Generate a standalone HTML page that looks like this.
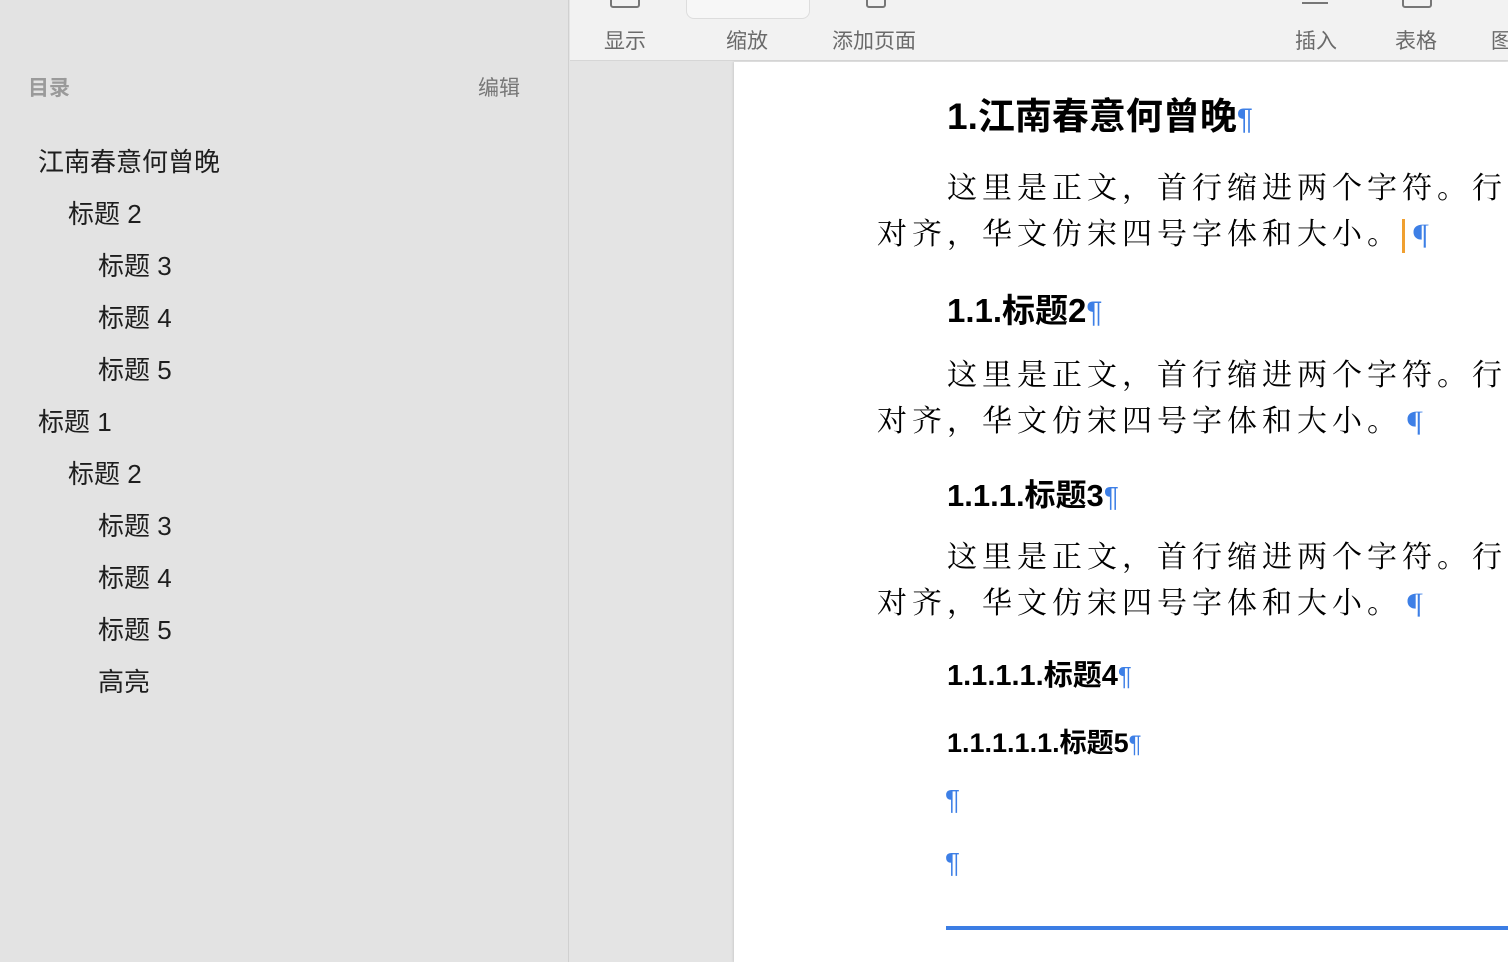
<!DOCTYPE html>
<html><head><meta charset="utf-8"><style>
*{margin:0;padding:0;box-sizing:border-box}
body{width:1508px;height:962px;overflow:hidden;position:relative;background:#e4e4e4;font-family:"Liberation Sans","Noto Sans CJK SC",sans-serif}
.side{position:absolute;left:0;top:0;width:569px;height:962px;background:#e3e3e3;border-right:1px solid #d0d0d0}
.t{position:absolute;font-size:26px;color:#1e1e1e;line-height:30px;white-space:nowrap}
.bar{position:absolute;left:570px;top:0;width:938px;height:61px;background:#f2f2f2;border-bottom:1px solid #d6d6d6}
.bl{position:absolute;top:25px;font-size:21px;color:#6a6a6a;white-space:nowrap}
.page{position:absolute;left:734px;top:62px;width:774px;height:900px;background:#fff;box-shadow:-1px 0 2px rgba(0,0,0,.1)}
.p{position:absolute;white-space:nowrap;color:#000}
.h{font-weight:bold;font-family:"Liberation Sans","Noto Sans CJK SC",sans-serif}
.b{font-family:"Noto Serif CJK SC","Liberation Serif",serif;font-size:30px;letter-spacing:5px}
.m{color:#3d7fe6;font-weight:normal}
.bm{color:#3d7fe6;font-size:26px;letter-spacing:0}
</style></head><body>
<div class="side">
<div class="t" style="left:28px;top:74px;font-size:21px;color:#9a9a9a;font-weight:bold">目录</div>
<div class="t" style="left:478px;top:74px;font-size:21px;color:#777">编辑</div>
<div class="t" style="left:38px;top:147px">江南春意何曾晚</div>
<div class="t" style="left:68px;top:199px">标题 2</div>
<div class="t" style="left:98px;top:251px">标题 3</div>
<div class="t" style="left:98px;top:303px">标题 4</div>
<div class="t" style="left:98px;top:355px">标题 5</div>
<div class="t" style="left:38px;top:407px">标题 1</div>
<div class="t" style="left:68px;top:459px">标题 2</div>
<div class="t" style="left:98px;top:511px">标题 3</div>
<div class="t" style="left:98px;top:563px">标题 4</div>
<div class="t" style="left:98px;top:615px">标题 5</div>
<div class="t" style="left:98px;top:667px">高亮</div>
</div>
<div class="bar">
<div style="position:absolute;left:40px;top:-6px;width:30px;height:14px;border:2px solid #777;border-radius:3px"></div>
<div style="position:absolute;left:116px;top:-10px;width:124px;height:29px;border:1px solid #ddd;border-radius:8px;background:#f7f7f7"></div>
<div style="position:absolute;left:296px;top:-6px;width:20px;height:14px;border:2px solid #777;border-radius:3px"></div>
<div style="position:absolute;left:732px;top:2px;width:26px;height:2px;background:#777"></div>
<div style="position:absolute;left:832px;top:-6px;width:30px;height:14px;border:2px solid #777;border-radius:3px"></div>
<div class="bl" style="left:34px">显示</div>
<div class="bl" style="left:156px">缩放</div>
<div class="bl" style="left:262px">添加页面</div>
<div class="bl" style="left:725px">插入</div>
<div class="bl" style="left:825px">表格</div>
<div class="bl" style="left:921px">图</div>
</div>
<div class="page"></div>
<div class="p h" style="left:947px;top:86px;font-size:37px">1.江南春意何曾晚<span class="m" style="font-size:30px">¶</span></div>
<div class="p b" style="left:947px;top:163px">这里是正文，首行缩进两个字符。行</div>
<div class="p b" style="left:877px;top:209px">对齐，华文仿宋四号字体和大小。<span style="display:inline-block;width:3px;height:34px;background:#f0a030;vertical-align:middle;margin-right:3px"></span><span class="bm">¶</span></div>
<div class="p h" style="left:947px;top:284px;font-size:33px">1.1.标题2<span class="m" style="font-size:30px">¶</span></div>
<div class="p b" style="left:947px;top:350px">这里是正文，首行缩进两个字符。行</div>
<div class="p b" style="left:877px;top:396px">对齐，华文仿宋四号字体和大小。<span class="bm">¶</span></div>
<div class="p h" style="left:947px;top:470px;font-size:31px">1.1.1.标题3<span class="m" style="font-size:28px">¶</span></div>
<div class="p b" style="left:947px;top:532px">这里是正文，首行缩进两个字符。行</div>
<div class="p b" style="left:877px;top:578px">对齐，华文仿宋四号字体和大小。<span class="bm">¶</span></div>
<div class="p h" style="left:947px;top:652px;font-size:29px">1.1.1.1.标题4<span class="m" style="font-size:26px">¶</span></div>
<div class="p h" style="left:947px;top:721px;font-size:27px">1.1.1.1.1.标题5<span class="m" style="font-size:24px">¶</span></div>
<div class="p m" style="left:945px;top:784px;font-size:28px">¶</div>
<div class="p m" style="left:945px;top:847px;font-size:28px">¶</div>
<div style="position:absolute;left:946px;top:926px;width:562px;height:4px;background:#3b7de4"></div>
</body></html>
